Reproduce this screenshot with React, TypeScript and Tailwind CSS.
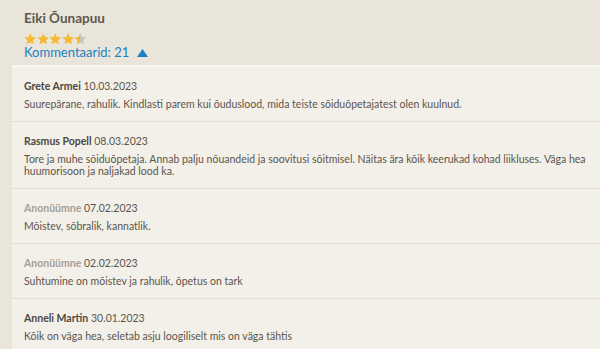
import React from 'react';

const comments = [
  { name: 'Grete Armei', date: '10.03.2023', text: 'Suurepärane, rahulik. Kindlasti parem kui õuduslood, mida teiste sõiduõpetajatest olen kuulnud.', anon: false },
  { name: 'Rasmus Popell', date: '08.03.2023', text: 'Tore ja muhe sõiduõpetaja. Annab palju nõuandeid ja soovitusi sõitmisel. Näitas ära kõik keerukad kohad liikluses. Väga hea huumorisoon ja naljakad lood ka.', anon: false },
  { name: 'Anonüümne', date: '07.02.2023', text: 'Mõistev, sõbralik, kannatlik.', anon: true },
  { name: 'Anonüümne', date: '02.02.2023', text: 'Suhtumine on mõistev ja rahulik, õpetus on tark', anon: true },
  { name: 'Anneli Martin', date: '30.01.2023', text: 'Kõik on väga hea, seletab asju loogiliselt mis on väga tähtis', anon: false },
];

function Star({ half }: { half?: boolean }) {
  return (
    <svg width="12.5" height="12" viewBox="0 0 24 23">
      <defs>
        <linearGradient id="half">
          <stop offset="50%" stopColor="#f6b932" />
          <stop offset="50%" stopColor="#c9c4bb" />
        </linearGradient>
      </defs>
      <path
        d="M12 0.5l3.3 7.3 7.9.8-5.9 5.3 1.7 7.8L12 17.7l-7 4 1.7-7.8-5.9-5.3 7.9-.8z"
        fill={half ? 'url(#half)' : '#f6b932'}
      />
    </svg>
  );
}

export default function App() {
  return (
    <div className="w-[600px] h-[349px] overflow-hidden bg-[#e9e5db] font-['Lato',sans-serif] text-[#5b554d]">
      <div className="px-6 pt-[10px] pb-[5px]">
        <h2 className="text-[13.5px] font-bold leading-[16px] text-[#5e5850]">Eiki Õunapuu</h2>
        <div className="flex mt-[7px]">
          <Star /><Star /><Star /><Star /><Star half />
        </div>
        <div className="flex items-center gap-[8px] text-[13px] leading-[15px] text-[#1b80c3]">
          <span>Kommentaarid: 21</span>
          <svg width="11" height="8" viewBox="0 0 11 8">
            <path d="M5.5 0L11 8H0z" fill="#1b80c3" />
          </svg>
        </div>
      </div>
      <div className="ml-3 bg-[#f3f0e9] border-t-2 border-[#f8f6f1]">
        {comments.map((c, i) => (
          <div key={i} className="pl-3 pr-[4px] pt-[12px] pb-[11px] border-b-[1.5px] border-[#e2ddd1]">
            <div className="text-[10.5px] leading-[14px]">
              <span className={c.anon ? 'font-bold text-[#a59f96]' : 'font-bold text-[#4d4741]'}>{c.name}</span>{' '}
              <span>{c.date}</span>
            </div>
            <p className="mt-[5px] text-[10.5px] leading-[12px]">{c.text}</p>
          </div>
        ))}
      </div>
    </div>
  );
}
